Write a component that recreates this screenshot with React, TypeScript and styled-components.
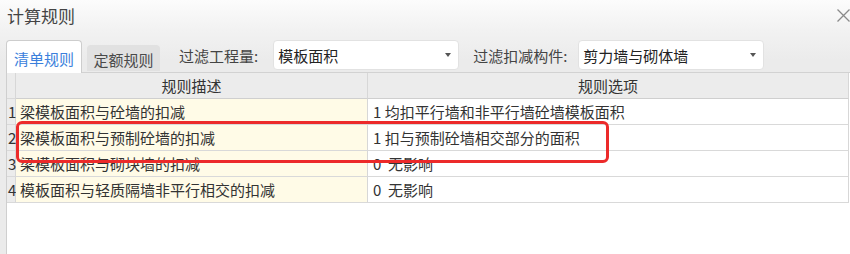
import React from "react";
import styled, { createGlobalStyle } from "styled-components";

const Global = createGlobalStyle`
  html, body { margin: 0; padding: 0; }
  body {
    width: 850px;
    height: 254px;
    overflow: hidden;
    font-family: "Noto Sans CJK SC", "Noto Sans", sans-serif;
  }
`;

const Window = styled.div`
  position: relative;
  width: 850px;
  height: 254px;
  background: linear-gradient(to bottom, #fcfcfc 0px, #f2f2f2 30px, #ebebeb 60px);
  display: flex;
  flex-direction: column;
  overflow: hidden;
`;

const TitleBar = styled.div`
  height: 36px;
  display: flex;
  align-items: center;
  justify-content: space-between;
  padding: 0 0 6px 7px;
  box-sizing: border-box;
`;

const Title = styled.div`
  font-size: 17px;
  color: #444;
  line-height: 1;
`;

const Close = styled.div`
  width: 13px;
  height: 13px;
  display: flex;
  color: #8a8a8a;
`;

const Toolbar = styled.div`
  margin-top: 4px;
  height: 32px;
  display: flex;
  align-items: flex-start;
  padding-left: 6px;
  position: relative;
  z-index: 2;
`;

const Tab = styled.div<{ $active?: boolean }>`
  box-sizing: border-box;
  height: ${(p) => (p.$active ? "33px" : "26px")};
  margin-top: ${(p) => (p.$active ? "0" : "5px")};
  width: ${(p) => (p.$active ? "76px" : "73px")};
  margin-left: ${(p) => (p.$active ? "0" : "5px")};
  background: ${(p) => (p.$active ? "#fff" : "#e1e1e1")};
  border: ${(p) => (p.$active ? "1px solid #cdcdcd" : "none")};
  border-bottom: none;
  border-radius: 4px 4px 0 0;
  color: ${(p) => (p.$active ? "#3b7fdc" : "#4a4a4a")};
  font-size: 15px;
  display: flex;
  align-items: center;
  justify-content: center;
  padding-top: 2px;
`;

const Label = styled.div<{ $gap: number }>`
  margin-left: ${(p) => p.$gap}px;
  height: 30px;
  display: flex;
  align-items: center;
  font-size: 15px;
  color: #444;
`;

const Select = styled.div<{ $gap: number }>`
  box-sizing: border-box;
  margin-left: ${(p) => p.$gap}px;
  width: 186px;
  height: 30px;
  background: #fff;
  border: 1px solid #e2e2e2;
  border-radius: 4px;
  display: flex;
  align-items: center;
  justify-content: space-between;
  padding: 0 6px 0 4px;
  font-size: 15px;
  color: #222;
`;

const Arrow = styled.span`
  width: 0;
  height: 0;
  border-left: 3.5px solid transparent;
  border-right: 3.5px solid transparent;
  border-top: 4px solid #555;
  margin-right: 1px;
`;

const TableArea = styled.div`
  position: relative;
  flex: 1;
  margin-left: 6px;
  background: #fff;
  border-left: 1px solid #cfcfcf;
  border-top: 1px solid #d2d2d2;
`;

const Grid = styled.div`
  display: grid;
  grid-template-columns: 9px 352px 481px;
  grid-auto-rows: 26px;
`;

const Cell = styled.div<{ $kind: "corner" | "head" | "num" | "desc" | "opt" }>`
  box-sizing: border-box;
  border-right: 1px solid #d7d7d7;
  border-bottom: 1px solid #d9d9d9;
  display: flex;
  align-items: center;
  font-size: 15px;
  color: #333;
  white-space: pre;
  overflow: visible;
  background: ${(p) =>
    p.$kind === "desc"
      ? "#fffbe7"
      : p.$kind === "opt"
      ? "#fff"
      : "#ececec"};
  justify-content: ${(p) => (p.$kind === "head" ? "center" : "flex-start")};
  padding-left: ${(p) =>
    p.$kind === "desc" ? "4px" : p.$kind === "opt" ? "5px" : p.$kind === "num" ? "1px" : "0"};
  ${(p) => (p.$kind === "head" ? "border-bottom-color: #cfcfcf;" : "")}
`;

const Highlight = styled.div`
  position: absolute;
  left: 9px;
  top: 48px;
  width: 593px;
  height: 42px;
  box-sizing: border-box;
  border: 3px solid #ec2a2a;
  border-radius: 6px;
  pointer-events: none;
`;

const rows = [
  ["1", "梁模板面积与砼墙的扣减", "1 均扣平行墙和非平行墙砼墙模板面积"],
  ["2", "梁模板面积与预制砼墙的扣减", "1 扣与预制砼墙相交部分的面积"],
  ["3", "梁模板面积与砌块墙的扣减", "0  无影响"],
  ["4", "模板面积与轻质隔墙非平行相交的扣减", "0  无影响"],
];

export default function App() {
  return (
    <Window>
      <Global />
      <TitleBar>
        <Title>计算规则</Title>
        <Close>
          <svg width="13" height="13" viewBox="0 0 13 13">
            <path d="M0.5 0.5 L12.5 12.5 M12.5 0.5 L0.5 12.5" stroke="currentColor" strokeWidth="1.3" fill="none" />
          </svg>
        </Close>
      </TitleBar>
      <Toolbar>
        <Tab $active>清单规则</Tab>
        <Tab>定额规则</Tab>
        <Label $gap={19}>过滤工程量:</Label>
        <Select $gap={15}>
          <span>模板面积</span>
          <Arrow />
        </Select>
        <Label $gap={14}>过滤扣减构件:</Label>
        <Select $gap={11}>
          <span>剪力墙与砌体墙</span>
          <Arrow />
        </Select>
      </Toolbar>
      <TableArea>
        <Grid>
          <Cell $kind="corner" />
          <Cell $kind="head">规则描述</Cell>
          <Cell $kind="head">规则选项</Cell>
          {rows.map(([n, d, o]) => (
            <React.Fragment key={n}>
              <Cell $kind="num">{n}</Cell>
              <Cell $kind="desc">{d}</Cell>
              <Cell $kind="opt">{o}</Cell>
            </React.Fragment>
          ))}
        </Grid>
        <Highlight />
      </TableArea>
    </Window>
  );
}
